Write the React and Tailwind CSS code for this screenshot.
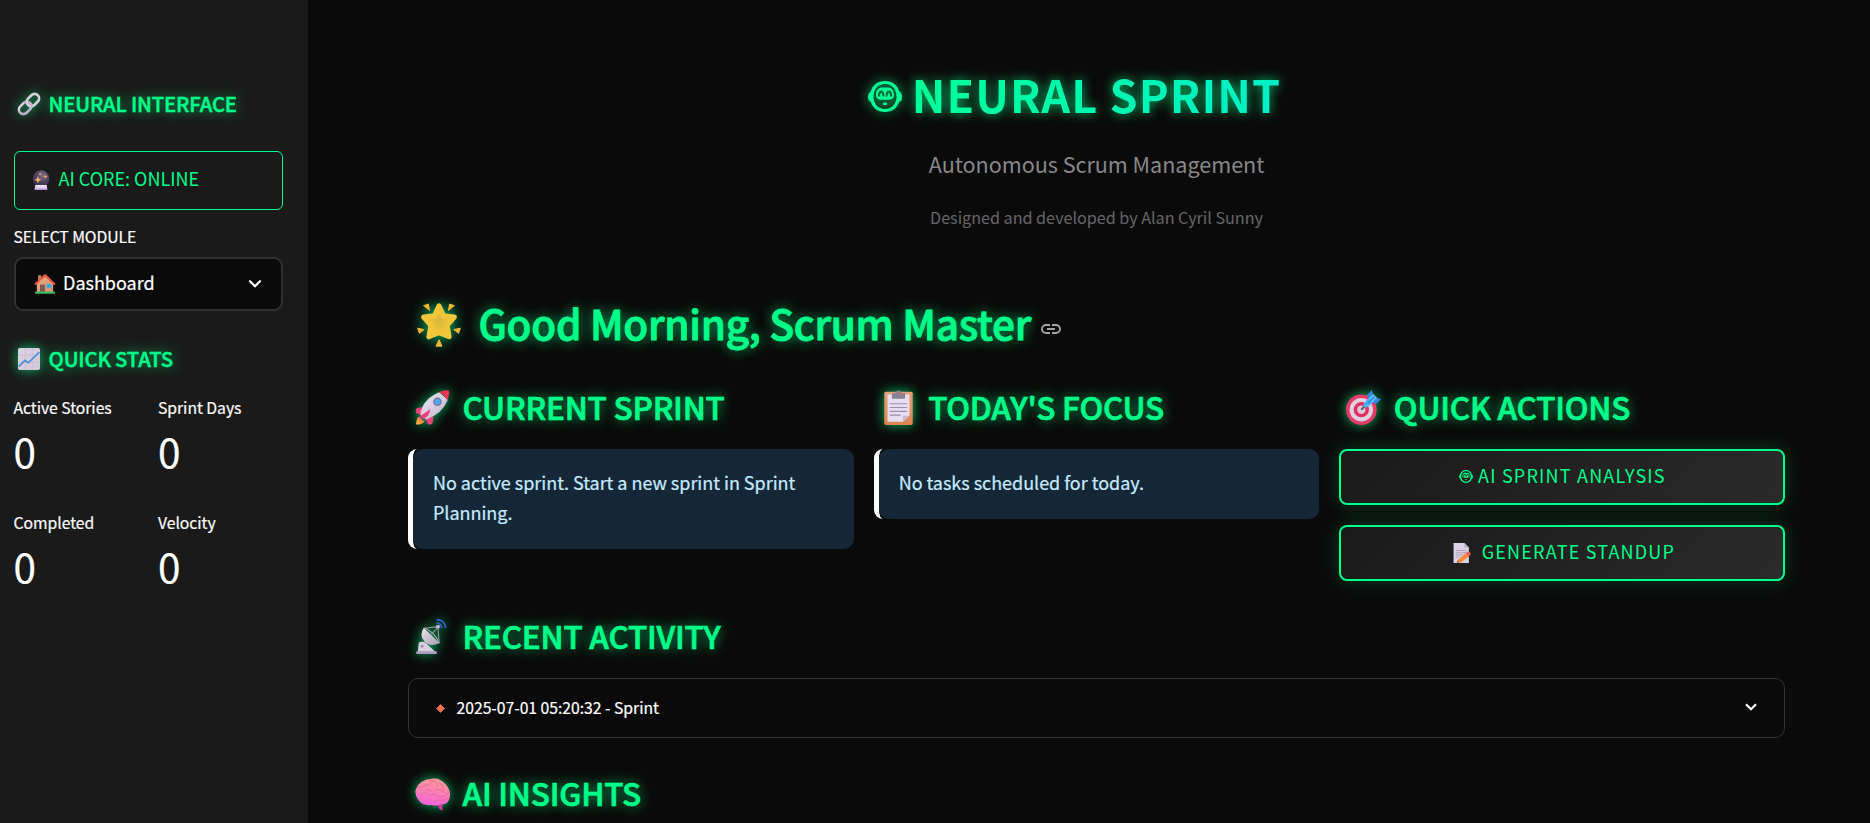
import React from "react";

const semibold = "font-medium [-webkit-text-stroke:0.022em_#00ff88]";
const glow = "[text-shadow:0_0_12.5px_rgba(0,255,136,0.75)]";
const iconGlow = "[filter:drop-shadow(0_0_6px_rgba(0,255,136,0.7))]";
const crisp = "[-webkit-text-stroke:0.2px_currentColor]";

function Emoji({ className, children }) {
  return (
    <svg viewBox="0 0 32 32" className={`shrink-0 overflow-visible ${className}`} aria-hidden="true">
      {children}
    </svg>
  );
}

function LinkEmoji({ className }) {
  return (
    <Emoji className={className}>
      <g fill="none" strokeWidth="4" transform="rotate(-45 16 16)">
        <rect x="-2" y="9.500" width="20" height="13" rx="6.500" stroke="#b9adc1" />
        <rect x="14" y="9.500" width="20" height="13" rx="6.500" stroke="#d6ccdc" />
        <path d="M12 9.500h-8a6 6 0 0 0-5.600 4" stroke="#e6deea" strokeWidth="1.600" />
        <path d="M11.500 22.500h0a6.500 6.500 0 0 0 6.500-6.500" stroke="#c5bacd" />
      </g>
    </Emoji>
  );
}

function CrystalBallEmoji({ className }) {
  return (
    <Emoji className={className}>
      <defs>
        <radialGradient id="ball" cx="0.6" cy="0.3" r="0.75">
          <stop offset="0" stopColor="#7c6f88" />
          <stop offset="0.5" stopColor="#51445f" />
          <stop offset="1" stopColor="#382a4b" />
        </radialGradient>
        <linearGradient id="ballBase" x1="0" y1="0" x2="0" y2="1">
          <stop offset="0" stopColor="#f4e8fb" />
          <stop offset="0.6" stopColor="#ddc9ec" />
          <stop offset="1" stopColor="#a77cc9" />
        </linearGradient>
      </defs>
      <circle cx="16" cy="14" r="13.500" fill="url(#ball)" />
      <path d="M7 24h18l1.500 8h-21z" fill="url(#ballBase)" />
      <path d="m11 9.500 1.600 4.400 4 1.600-4 1.600L11 21l-1.600-4-4-1.600 4-1.600zM23 7l1 2.500 2.500 1L24 11.500 23 14l-1-2.500-2.500-1 2.500-1zM14.500 4l.8 1.700 1.700.8-1.700.8-.8 1.700-.8-1.700-1.700-.8 1.700-.8z" fill="#ffb266" />
    </Emoji>
  );
}

function HouseEmoji({ className }) {
  return (
    <Emoji className={className}>
      <defs>
        <linearGradient id="wall" x1="0" y1="0" x2="1" y2="1">
          <stop offset="0" stopColor="#e9ac84" />
          <stop offset="1" stopColor="#d99070" />
        </linearGradient>
      </defs>
      <path d="M5 2h5v12H5z" fill="#b78a5d" />
      <path d="M3 15 16 3l13 12v14H3z" fill="url(#wall)" />
      <path d="M1 16 15 2.500q1.200-1 2.400 0L31 16" fill="none" stroke="#f25640" strokeWidth="3" strokeLinejoin="round" strokeLinecap="round" />
      <path d="M8 17h8v12H8z" fill="#7d5a53" />
      <path d="M19 16h7v6h-7z" fill="#28a8f0" />
      <rect x="0" y="28" width="32" height="3.400" rx="1.200" fill="#3bb860" />
    </Emoji>
  );
}

function ChartEmoji({ className }) {
  return (
    <Emoji className={className}>
      <defs>
        <linearGradient id="paper" x1="0" y1="0" x2="1" y2="1">
          <stop offset="0" stopColor="#ddd3e3" />
          <stop offset="1" stopColor="#d2c7d9" />
        </linearGradient>
      </defs>
      <rect width="32" height="32" rx="2.500" fill="url(#paper)" />
      <path d="M10.500 0v32M21 0v32M0 10.500h32M0 21h32" stroke="#c6bbce" strokeWidth="1" />
      <path d="m1 27 9-9 5 3.500L31 6" fill="none" stroke="#3f8fdb" strokeWidth="2.400" />
    </Emoji>
  );
}

function StarEmoji({ className }) {
  return (
    <Emoji className={className}>
      <defs>
        <radialGradient id="starFill" cx="0.5" cy="0.5" r="0.6">
          <stop offset="0" stopColor="#d9b83a" />
          <stop offset="0.6" stopColor="#f0c63c" />
          <stop offset="1" stopColor="#fbd23f" />
        </radialGradient>
      </defs>
      <path d="M16 2 19.300 9.200 27.200 10.200 21.900 16.300 23.400 24.600 16 21.600 8.600 24.600 10.100 16.300 4.800 10.200 12.700 9.200z" fill="url(#starFill)" stroke="#f1c63b" strokeWidth="3.600" strokeLinejoin="round" />
      <g fill="#efb72f" stroke="#efb72f" strokeWidth="0.900" strokeLinejoin="round">
        <path d="m5 1.800 3.300-.9.700 4.300zM27 1.800l-3.300-.9-.7 4.300zM.6 18.400l4.400.9-3.200 2.500zM31.400 18.400l-4.400.9 3.200 2.500zM16 27l2 4.300h-4z" />
      </g>
    </Emoji>
  );
}

function RocketEmoji({ className }) {
  return (
    <Emoji className={className}>
      <defs>
        <linearGradient id="hull" x1="0" y1="0" x2="1" y2="1">
          <stop offset="0" stopColor="#f2eaf5" />
          <stop offset="1" stopColor="#bdb0c8" />
        </linearGradient>
        <linearGradient id="flame" x1="1" y1="0" x2="0" y2="1">
          <stop offset="0" stopColor="#f06a2e" />
          <stop offset="1" stopColor="#ffb648" />
        </linearGradient>
      </defs>
      <path d="M4.500 23.500Q1 26 1 31.500q5 .5 8-3z" fill="url(#flame)" />
      <path d="M8 15.500 2 16.500Q0 17.500 1 21l5 2zM17 24l-1 6.500q-1.500 2-4.500.5L10 26z" fill="#f2447b" />
      <path d="M5 23Q6 9 22 2l8 7Q25 22 10 27z" fill="url(#hull)" />
      <path d="M22 2q5-2.500 9-1.500.5 4-1.400 9Q27 4 22 2z" fill="#ee3556" />
      <path d="m4.500 22.500 6 5.500-2 1-5-4.500z" fill="#5d4c79" />
      <path d="m14 17.500-9.500 6.500 3.500 2.500Q13.500 23 14 17.500z" fill="#ee3f7a" />
      <circle cx="20.500" cy="10.700" r="3.900" fill="#7c7794" />
      <circle cx="20.500" cy="10.700" r="2.700" fill="#4fa6f5" />
    </Emoji>
  );
}

function ClipboardEmoji({ className }) {
  return (
    <Emoji className={className}>
      <defs>
        <linearGradient id="board" x1="0" y1="0" x2="0" y2="1">
          <stop offset="0" stopColor="#e6a377" />
          <stop offset="1" stopColor="#dd8551" />
        </linearGradient>
      </defs>
      <rect x="3" y="1.500" width="26" height="30.500" rx="1.500" fill="url(#board)" />
      <path d="M6 4h20v19.500L20 29H6z" fill="#e7dff0" />
      <path d="M26 23.500h-6V29z" fill="#c3b8d0" />
      <path d="M10 3h3q.5-2.500 3-2.500T19 3h3v5H10z" fill="#8b8192" />
      <circle cx="16" cy="3" r="1" fill="#c17a58" />
      <path d="M8 12.500h16M8 16h16M8 19.500h16M8 23h10" stroke="#9b8fab" strokeWidth="1" />
    </Emoji>
  );
}

function TargetEmoji({ className }) {
  return (
    <Emoji className={className}>
      <circle cx="14" cy="18" r="14" fill="#e53b68" />
      <circle cx="14" cy="18" r="10.700" fill="#dfd0e2" />
      <circle cx="14" cy="18" r="7" fill="#e32f60" />
      <circle cx="14" cy="18" r="3.800" fill="#dccbdc" />
      <path d="m14.500 17.500 3-3" stroke="#70607a" strokeWidth="2" strokeLinecap="round" />
      <path d="m16 13 6-7.500 4.500 4.500-7.500 6q-3 .5-3-3z" fill="#46b3f3" />
      <path d="m20.500 8-1.300-3.500L23.500 0l1.200 3.500zM24 11.500l3.500 1.300 4.500-4.300-3.500-1.200z" fill="#3a82e4" />
      <path d="m20.500 8 4.200-4.500L28.500 7.300 24 11.500z" fill="#5fc0fb" />
      <path d="m20 12 6-6" stroke="#2f7fdd" strokeWidth="1.200" />
    </Emoji>
  );
}

function MemoEmoji({ className }) {
  return (
    <Emoji className={className}>
      <path d="M2.500 0H20l7 7v25H2.500z" fill="#dcd4e6" />
      <path d="M20 0v7h7z" fill="#b3a8c0" />
      <path d="M6 12h17M6 15.500h17M6 19h12M6 22.500h6" stroke="#9d91ae" strokeWidth="1.200" />
      <path d="m9 27 13-10.500 5 5L14 31l-6 .5z" fill="#fb8b3c" />
      <path d="m22 16.500 3-2.700q2-1 3.500.5t1 3.500l-2.500 3.700z" fill="#ff5a55" />
      <path d="m8 31.500.6-3 2.700 2.500z" fill="#7a4a43" />
    </Emoji>
  );
}

function SatelliteEmoji({ className }) {
  return (
    <Emoji className={className}>
      <defs>
        <linearGradient id="dish" x1="0" y1="0" x2="1" y2="1">
          <stop offset="0" stopColor="#ece4f0" />
          <stop offset="1" stopColor="#aaa0b2" />
        </linearGradient>
      </defs>
      <path d="M3.500 21.500q3-1.500 6.500.5l9 8.500H2.500z" fill="#d9cfe1" />
      <rect x="1" y="29.500" width="19" height="2.500" rx="1" fill="#a89bbb" />
      <circle cx="6.500" cy="25" r="1.200" fill="#998ca8" />
      <path d="M8 8Q3.500 15 8.500 20.500T22.500 22z" fill="url(#dish)" />
      <path d="M8 8q9 3 14.500 14" fill="none" stroke="#b3a9bd" strokeWidth="1.200" />
      <path d="M9 8.500 21 7M21 8l1 12M20.500 8 15 14" stroke="#9d94a7" strokeWidth="1" />
      <circle cx="21" cy="7" r="1.800" fill="#c4bccb" />
      <path d="M19.500 3.500q4.500 0 5 5M19.500.5Q27.500.5 28 8.500" fill="none" stroke="#2c62c9" strokeWidth="1.600" />
    </Emoji>
  );
}

function BrainEmoji({ className }) {
  return (
    <Emoji className={className}>
      <defs>
        <linearGradient id="brain" x1="0.6" y1="0" x2="0.4" y2="1">
          <stop offset="0" stopColor="#ff9a97" />
          <stop offset="0.5" stopColor="#fb80b4" />
          <stop offset="1" stopColor="#f560dd" />
        </linearGradient>
      </defs>
      <path d="m20 24 5 1.500V31q-1.500 1-3-1.500z" fill="#d935b0" />
      <path d="M15 2.500q8-1 13 5 5.500 6 3.500 13-1.500 6-8.500 5.500-4 2-8 .5-8 1-11.500-4Q-1 17 .8 12 4 3.500 15 2.500z" fill="url(#brain)" />
      <path d="M3 10q3 1.500 5-1.500 5 1 8-3M13 3.500Q20 4 21 9M22 6q4 2 4 6M18 13q6-2 10 3M31 15q-4 5-9 4-5-4-9-1M10 13q4-1 6 2M5 17q3-3 7 0M17 24q3-3 6-2 4 1 7-2" fill="none" stroke="#e066a2" strokeWidth="0.800" strokeLinecap="round" />
    </Emoji>
  );
}

function DiamondEmoji({ className }) {
  return (
    <Emoji className={className}>
      <path d="M16 2 30 16 16 30 2 16z" fill="#f7704d" stroke="#f7704d" strokeWidth="3" strokeLinejoin="round" />
    </Emoji>
  );
}

function RobotFace({ className }) {
  return (
    <svg viewBox="0 0 34 31" className={`shrink-0 overflow-visible ${className}`} aria-hidden="true">
      <path
        fill="currentColor"
        fillRule="evenodd"
        d="M17 0C24 0 29.500 4 31 10Q34 11.500 34 16T31 21C29.500 27 24 31 17 31S4.500 27 3 21Q0 19.500 0 16T3 10C4.500 4 10 0 17 0ZM17 3C10 3 5.500 8 5.500 15.500S10 28 17 28 28.500 23 28.500 15.500 24 3 17 3Z"
      />
      <path
        fill="currentColor"
        fillRule="evenodd"
        d="M13 6.500H21Q26 8 26 13.500 26 18.700 21 18.700H13Q8 18.700 8 13.500 8 8 13 6.500ZM9.800 15.500H12Q12 11.900 13.300 11.900T14.600 15.500H16.500Q16.300 9.600 13.200 9.600T9.800 15.500ZM17.500 15.500H19.500Q19.500 11.900 20.800 11.900T22.100 15.500H24.200Q24 9.600 20.900 9.600T17.500 15.500Z"
      />
      <rect x="15" y="21.500" width="4" height="2.600" rx="1.200" fill="currentColor" />
    </svg>
  );
}

function Chevron({ className, cap }) {
  return (
    <svg viewBox="0 0 12 8" className={`shrink-0 overflow-visible ${className}`} fill="none" stroke="#fafafa" strokeWidth="2.300" strokeLinecap={cap} aria-hidden="true">
      <path d="m1 1.200 5 5 5-5" />
    </svg>
  );
}

function SidebarHeading({ icon: Icon, children }) {
  return (
    <h2 className={`flex h-[30px] items-center pl-1 text-[20.25px] leading-[30px] tracking-[-0.14px] whitespace-nowrap text-[#00ff88] ${semibold} ${glow}`}>
      <Icon className={`mt-[2px] mr-[8.5px] size-[22px] ${iconGlow}`} />
      <span className="mt-[2px]">{children}</span>
    </h2>
  );
}

function SectionHeading({ icon: Icon, children }) {
  return (
    <h3 className={`flex h-[42px] items-center pl-[7px] text-[31.5px] leading-[42px] tracking-[-0.2px] whitespace-nowrap text-[#00ff88] ${semibold} ${glow}`}>
      <Icon className={`mt-[2px] mr-[12.5px] size-[35px] ${iconGlow}`} />
      {children}
    </h3>
  );
}

function Stat({ label }) {
  return (
    <div className={`-ml-[0.5px] ${crisp}`}>
      <div className="h-6 pt-px text-[15.75px] leading-6 tracking-[-0.05px] whitespace-nowrap text-[#fafafa]">{label}</div>
      <div className="mt-[7px] h-[49px] text-[40.5px] leading-[49px] text-white">0</div>
    </div>
  );
}

function InfoBox({ children }) {
  return (
    <div className="mt-[22px] rounded-[9px] border-l-[5px] border-white">
      <div className={`rounded-[10px] bg-[#152737] px-5 pt-[18px] pb-[22px] text-[18px] leading-[30px] tracking-[-0.03px] text-[#c7ebff] ${crisp}`}>{children}</div>
    </div>
  );
}

function ActionButton({ children }) {
  return (
    <button className="flex h-14 w-full items-center justify-center rounded-[8px] border-2 border-[#00ff88] bg-[linear-gradient(135deg,#1a1a1a,#2a2a2a)] pb-[5px] text-[18px] leading-[30px] tracking-[1.2px] text-[#00ff88] shadow-[0_0_19px_rgba(0,255,136,0.2)]">
      {children}
    </button>
  );
}

export default function App() {
  return (
    <div className="flex h-[823px] overflow-hidden bg-[#0a0a0a] font-['Noto_Sans_CJK_SC',sans-serif] text-white">
      <aside className="w-[308px] shrink-0 bg-[#1a1a1a] pt-[88px] pr-[25px] pl-[14px]">
        <SidebarHeading icon={LinkEmoji}>NEURAL INTERFACE</SidebarHeading>

        <div className="mt-[33px] flex h-[59px] items-center rounded-[6px] border border-[#00ff88] pb-[4px] pl-4 text-[18px] text-[#00ff88]">
          <CrystalBallEmoji className="mt-[2px] mr-[7.5px] size-5" />
          <span className="mb-[2px] leading-[30px]">AI CORE: ONLINE</span>
        </div>

        <div className={`mt-[14px] -ml-[0.5px] h-6 pt-px text-[15.75px] leading-6 tracking-[-0.08px] ${crisp}`}>SELECT MODULE</div>
        <div className="mt-[9px] flex h-[54px] items-center rounded-[9px] border-2 border-[#303030] bg-[#0a0a0a] pr-5 pl-[19px]">
          <HouseEmoji className="mr-2 size-5" />
          <span className={`mb-[5px] text-[18px] leading-[30px] ${crisp}`}>Dashboard</span>
          <Chevron className="ml-auto h-2 w-3" cap="round" />
        </div>

        <div className="mt-8">
          <SidebarHeading icon={ChartEmoji}>QUICK STATS</SidebarHeading>
        </div>
        <div className="mt-[22px] grid grid-cols-[124.500px_1fr] gap-x-5 gap-y-[35px]">
          <Stat label="Active Stories" />
          <Stat label="Sprint Days" />
          <Stat label="Completed" />
          <Stat label="Velocity" />
        </div>
      </aside>

      <main className="flex-1 pt-[63px] pr-[85px] pl-[100px]">
        <header className="text-center">
          <h1 className="flex h-[60px] items-center justify-center pr-[44px] [filter:drop-shadow(0_0_6px_rgba(0,255,136,0.75))]">
            <RobotFace className="mt-[7px] mr-[10px] h-[31px] w-[34px] text-[#00ff95]" />
            <span className="mt-[2px] bg-[linear-gradient(90deg,#00ff98,#00efc8)] bg-clip-text text-[45px] leading-[60px] font-bold tracking-[1.05px] text-transparent">
              NEURAL SPRINT
            </span>
          </h1>
          <p className="mt-[25px] h-8 text-[21.6px] leading-8 tracking-[-0.04px] text-[#888888]">Autonomous Scrum Management</p>
          <p className="mt-[25px] h-6 text-[16.2px] leading-6 tracking-[-0.03px] text-[#666666]">Designed and developed by Alan Cyril Sunny</p>
        </header>

        <h2 className={`mt-[66px] flex h-[54px] items-center pl-[9px] text-[40.5px] leading-[54px] tracking-[-0.27px] whitespace-nowrap text-[#00ff88] ${semibold} ${glow}`}>
          <StarEmoji className={`mt-[5px] mr-[17.5px] size-11 ${iconGlow}`} />
          <span className="mt-[2px]">Good Morning, Scrum Master</span>
          <svg viewBox="0 0 20 10" className="mt-[14px] ml-[10px] h-[10px] w-5" fill="none" stroke="#a3a3a3" strokeWidth="1.900" aria-hidden="true">
            <path d="M9 1H5a4 4 0 0 0 0 8h4M11 1h4a4 4 0 0 1 0 8h-4M6 5h8" />
          </svg>
        </h2>

        <div className="mt-9 grid grid-cols-3 items-start gap-5">
          <section>
            <SectionHeading icon={RocketEmoji}>CURRENT SPRINT</SectionHeading>
            <InfoBox>No active sprint. Start a new sprint in Sprint Planning.</InfoBox>
          </section>
          <section>
            <SectionHeading icon={ClipboardEmoji}>TODAY'S FOCUS</SectionHeading>
            <InfoBox>No tasks scheduled for today.</InfoBox>
          </section>
          <section>
            <SectionHeading icon={TargetEmoji}>QUICK ACTIONS</SectionHeading>
            <div className="mt-[22px] flex flex-col gap-5">
              <ActionButton>
                <RobotFace className="mt-[4px] mr-[5.5px] h-[13px] w-[14px]" />
                AI SPRINT ANALYSIS
              </ActionButton>
              <ActionButton>
                <MemoEmoji className="mt-[4px] mr-[9.5px] ml-[3px] size-5" />
                GENERATE STANDUP
              </ActionButton>
            </div>
          </section>
        </div>

        <section className="mt-[33px]">
          <SectionHeading icon={SatelliteEmoji}>RECENT ACTIVITY</SectionHeading>
          <div className="mt-[22px] flex h-[60px] items-center rounded-[10px] border border-[#333333] pr-[27px] pl-[27px]">
            <DiamondEmoji className="mr-[11.5px] size-[9px]" />
            <span className={`text-[15.75px] leading-6 tracking-[-0.03px] ${crisp}`}>2025-07-01 05:20:32 - Sprint</span>
            <Chevron className="mb-[2px] ml-auto h-2 w-3" cap="butt" />
          </div>
        </section>

        <section className="mt-[33px]">
          <SectionHeading icon={BrainEmoji}>AI INSIGHTS</SectionHeading>
        </section>
      </main>
    </div>
  );
}
